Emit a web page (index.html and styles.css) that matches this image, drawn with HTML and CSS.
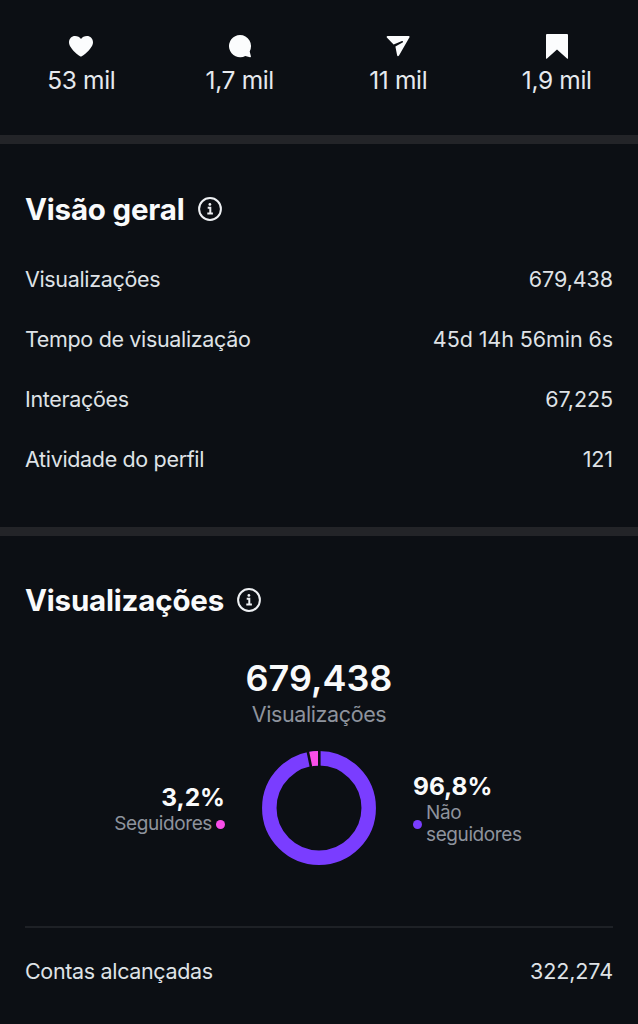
FILE: index.html
```html
<!DOCTYPE html>
<html lang="pt-BR">
  <head>
    <meta charset="UTF-8" />
    <meta name="viewport" content="width=device-width, initial-scale=1.0" />
    <title>Insights</title>
    <link rel="stylesheet" href="styles.css">
  </head>
  <body>
    <div class="stats">
      <div class="stat">
        <svg class="stat-icon" viewBox="0 0 28 28">
          <path d="M14 24.600C12.600 24.600 2 16.400 2 10.200C2 6.500 4.700 3.900 8 3.900C10.600 3.900 12.800 5 14 7C15.200 5 17.400 3.900 20 3.900C23.300 3.900 26 6.500 26 10.200C26 16.400 15.400 24.600 14 24.600Z" />
        </svg>
        <span class="stat-value">53 mil</span>
      </div>
      <div class="stat">
        <svg class="stat-icon" viewBox="0 0 28 28">
          <path d="M14 3A11.100 11.100 0 1 0 19.300 23.900L24 25.200Q25.200 25.400 24.900 24.200L23.700 19.400A11.100 11.100 0 0 0 14 3Z" />
        </svg>
        <span class="stat-value">1,7 mil</span>
      </div>
      <div class="stat">
        <svg class="stat-icon" viewBox="0 0 28 28">
          <path d="M3.500 3.900H24.700Q26.200 4 25.500 5.300L15 23.600Q13.700 25 13.100 23.300L11.400 14.600L19 10.200Q19.300 8.800 18 8.900L9.600 12.400L2.800 5.400Q2.200 4.200 3.500 3.900Z" />
        </svg>
        <span class="stat-value">11 mil</span>
      </div>
      <div class="stat">
        <svg class="stat-icon" viewBox="0 0 28 28">
          <path d="M4 2H24Q25 2 25 3V26Q25 27.400 24 26.500L14 17.600L4 26.500Q3 27.400 3 26V3Q3 2 4 2Z" />
        </svg>
        <span class="stat-value">1,9 mil</span>
      </div>
    </div>

    <div class="section overview">
      <h2 class="title">
        <span>Visão geral</span>
        <svg class="info" viewBox="0 0 24 24">
          <circle cx="12" cy="12" r="10.9" />
          <path d="M9.700 10.700H12.300V16.400M9.300 16.600H14.900" />
          <circle class="info-dot" cx="11.900" cy="7.400" r="1.400" />
        </svg>
      </h2>
      <div class="row">
        <span>Visualizações</span>
        <span class="row-value">679,438</span>
      </div>
      <div class="row">
        <span>Tempo de visualização</span>
        <span class="row-value">45d 14h 56min 6s</span>
      </div>
      <div class="row">
        <span>Interações</span>
        <span class="row-value">67,225</span>
      </div>
      <div class="row">
        <span>Atividade do perfil</span>
        <span class="row-value">121</span>
      </div>
    </div>

    <div class="section views">
      <h2 class="title">
        <span>Visualizações</span>
        <svg class="info" viewBox="0 0 24 24">
          <circle cx="12" cy="12" r="10.9" />
          <path d="M9.700 10.700H12.300V16.400M9.300 16.600H14.900" />
          <circle class="info-dot" cx="11.900" cy="7.400" r="1.400" />
        </svg>
      </h2>

      <div class="total">
        <div class="total-value">679,438</div>
        <div class="total-label">Visualizações</div>
      </div>

      <div class="chart">
        <div class="legend legend-followers">
          <div class="percent">3,2%</div>
          <div class="legend-label">
            <span>Seguidores</span>
            <i class="dot dot-pink"></i>
          </div>
        </div>

        <svg class="donut" viewBox="0 0 114 114">
          <circle class="ring" cx="57" cy="57" r="49.7" />
          <path class="slice" d="M57 7.300A49.700 49.700 0 0 0 47.100 8.300" />
          <path class="gap" d="M57.300 -1V16M45.500 -1L49 16" />
        </svg>

        <div class="legend legend-others">
          <div class="percent">96,8%</div>
          <div class="legend-label">
            <i class="dot dot-purple"></i>
            <span>Não<br>seguidores</span>
          </div>
        </div>
      </div>

      <div class="row row-reach">
        <span>Contas alcançadas</span>
        <span class="row-value">322,274</span>
      </div>
    </div>
  </body>
</html>
```
FILE: styles.css
```css
* {
  margin: 0;
  padding: 0;
  box-sizing: border-box;
}

body {
  font-family: Inter, "Liberation Sans", sans-serif;
  background: #0c0f14;
  color: #f9fafb;
  height: 1024px;
  overflow: hidden;
}

/* Top counters */
.stats {
  display: grid;
  grid-template-columns: repeat(4, 1fr);
  height: 135px;
  padding: 32px 2px 0;
}

.stat {
  display: flex;
  flex-direction: column;
  align-items: center;
}

.stat-icon {
  width: 28px;
  height: 28px;
  fill: #fbfcfd;
}

.stat-value {
  margin-top: 5px;
  font-size: 24.5px;
  line-height: 30px;
  letter-spacing: -0.35px;
  color: #e6e9ee;
}

.section {
  border-top: 9px solid #232428;
  padding: 0 25px;
}

.overview {
  height: 392px;
}

.title {
  display: flex;
  align-items: center;
  height: 40px;
  margin-top: 45px;
  font-size: 29.5px;
  font-weight: 700;
  letter-spacing: -0.2px;
}

.info {
  width: 24px;
  height: 24px;
  margin-left: 13px;
  fill: none;
  stroke: #eef0f3;
  stroke-width: 2;
}

.info .info-dot {
  fill: #eef0f3;
  stroke: none;
}

.row {
  display: flex;
  justify-content: space-between;
  align-items: center;
  height: 60px;
  font-size: 21.5px;
  letter-spacing: -0.34px;
  color: #dfe2e6;
}

.row-value {
  letter-spacing: -0.08px;
}

.overview .title {
  margin-bottom: 20px;
}

.views .title {
  margin-top: 44px;
}

/* Total above the chart */
.total {
  margin-top: 36px;
  text-align: center;
}

.total-value {
  font-size: 36px;
  font-weight: 600;
  line-height: 44px;
}

.total-label {
  font-size: 21.5px;
  line-height: 28px;
  letter-spacing: -0.38px;
  color: #8e939d;
}

.chart {
  display: flex;
  height: 114px;
  margin-top: 23px;
}

.legend {
  width: 200px;
}

.legend-followers {
  display: flex;
  flex-direction: column;
  align-items: flex-end;
  padding-top: 31px;
}

.legend-others {
  margin-left: 37px;
  padding-top: 20px;
}

.percent {
  font-size: 24.5px;
  font-weight: 700;
  line-height: 31px;
}

.legend-label {
  display: flex;
  align-items: center;
  font-size: 19px;
  line-height: 22px;
  letter-spacing: -0.4px;
  color: #8e939d;
}

.dot {
  width: 9px;
  height: 9px;
  border-radius: 50%;
}

.dot-pink {
  margin-left: 4px;
  background: #fa4ee8;
}

.dot-purple {
  margin-right: 4px;
  background: #7a3dff;
}

.donut {
  width: 114px;
  height: 114px;
  margin-left: 37px;
  fill: none;
}

.ring {
  stroke: #7a3dff;
  stroke-width: 14.5;
}

.slice {
  stroke: #fa4ee8;
  stroke-width: 14.5;
}

.gap {
  stroke: #0c0f14;
  stroke-width: 2.6;
}

.row-reach {
  height: 88px;
  margin-top: 61px;
  border-top: 2px solid #1e2126;
}
```
